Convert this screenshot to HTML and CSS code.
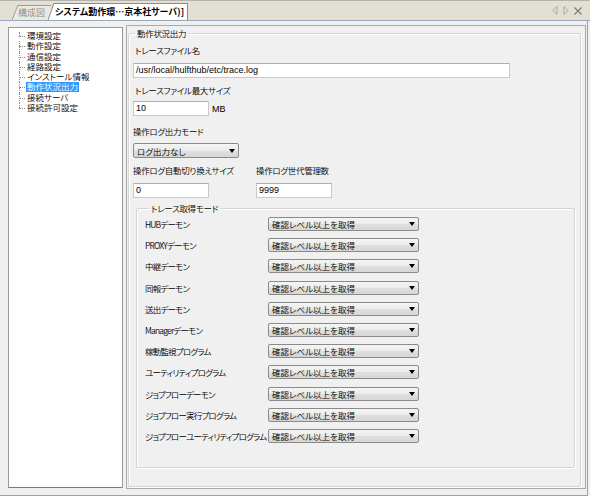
FILE: index.html
```html
<!DOCTYPE html>
<html lang="ja">
<head>
<meta charset="utf-8">
<title>システム動作環境</title>
<link rel="stylesheet" href="styles.css">
</head>
<body>
<div class="window">
  <div class="tabbar">
    <div class="tabs">
      <div class="tab inactive">
        <svg class="slant" width="6" height="15" viewBox="0 0 6 15"><polygon points="0,15 6,0 6,15" fill="#ebe9df"/><line x1="0" y1="15" x2="6" y2="0" stroke="#9c9c9c" stroke-width="1"/></svg>
        <span class="tab-body">構成図</span>
      </div>
      <div class="tab active">
        <svg class="slant" width="6" height="17" viewBox="0 0 6 17"><polygon points="0,17 6,0 6,17" fill="#ffffff"/><line x1="0" y1="17" x2="6" y2="0" stroke="#8c8c8c" stroke-width="1"/></svg>
        <span class="tab-body">システム動作環…京本社サーバ)]</span>
      </div>
    </div>
    <div class="tabtools">
      <svg width="6" height="9" viewBox="0 0 6 9"><polygon points="5,0.5 0.8,4.5 5,8.5" fill="none" stroke="#a8a8a8" stroke-width="1"/></svg>
      <svg width="6" height="9" viewBox="0 0 6 9"><polygon points="1,0.5 5.2,4.5 1,8.5" fill="none" stroke="#a8a8a8" stroke-width="1"/></svg>
      <svg width="8" height="8" viewBox="0 0 8 8"><path d="M0.5 0.5 L7.5 7.5 M7.5 0.5 L0.5 7.5" stroke="#7a7a7a" stroke-width="1.2"/></svg>
    </div>
  </div>
  <div class="main">
    <div class="tree">
      <ul class="tree-list">
        <li><span class="node">環境設定</span></li>
        <li><span class="node">動作設定</span></li>
        <li><span class="node">通信設定</span></li>
        <li><span class="node">経路設定</span></li>
        <li><span class="node">インストール情報</span></li>
        <li><span class="node selected">動作状況出力</span></li>
        <li><span class="node">接続サーバ</span></li>
        <li><span class="node">接続許可設定</span></li>
      </ul>
    </div>
    <div class="panel">
      <fieldset class="group outer">
        <legend>動作状況出力</legend>
        <div class="label first">トレースファイル名</div>
        <div class="field-row"><div class="input wide">/usr/local/hulfthub/etc/trace.log</div></div>
        <div class="label">トレースファイル最大サイズ</div>
        <div class="field-row fr2"><div class="input short">10</div><span class="unit">MB</span></div>
        <div class="label l3">操作ログ出力モード</div>
        <div class="field-row fr3"><div class="combo mode"><span>ログ出力なし</span><i class="arrow"></i></div></div>
        <div class="pair labels">
          <div class="plabel">操作ログ自動切り換えサイズ</div>
          <div class="plabel">操作ログ世代管理数</div>
        </div>
        <div class="pair inputs">
          <div class="input short">0</div>
          <div class="input short">9999</div>
        </div>
        <fieldset class="group inner">
          <legend>トレース取得モード</legend>
          <div class="rows">
            <div class="row"><span class="rlabel">HUBデーモン</span><div class="combo level"><span>確認レベル以上を取得</span><i class="arrow"></i></div></div>
            <div class="row"><span class="rlabel">PROXYデーモン</span><div class="combo level"><span>確認レベル以上を取得</span><i class="arrow"></i></div></div>
            <div class="row"><span class="rlabel">中継デーモン</span><div class="combo level"><span>確認レベル以上を取得</span><i class="arrow"></i></div></div>
            <div class="row"><span class="rlabel">同報デーモン</span><div class="combo level"><span>確認レベル以上を取得</span><i class="arrow"></i></div></div>
            <div class="row"><span class="rlabel">送出デーモン</span><div class="combo level"><span>確認レベル以上を取得</span><i class="arrow"></i></div></div>
            <div class="row"><span class="rlabel">Managerデーモン</span><div class="combo level"><span>確認レベル以上を取得</span><i class="arrow"></i></div></div>
            <div class="row"><span class="rlabel">稼動監視プログラム</span><div class="combo level"><span>確認レベル以上を取得</span><i class="arrow"></i></div></div>
            <div class="row"><span class="rlabel">ユーティリティプログラム</span><div class="combo level"><span>確認レベル以上を取得</span><i class="arrow"></i></div></div>
            <div class="row"><span class="rlabel">ジョブフローデーモン</span><div class="combo level"><span>確認レベル以上を取得</span><i class="arrow"></i></div></div>
            <div class="row"><span class="rlabel">ジョブフロー実行プログラム</span><div class="combo level"><span>確認レベル以上を取得</span><i class="arrow"></i></div></div>
            <div class="row"><span class="rlabel">ジョブフローユーティリティプログラム</span><div class="combo level"><span>確認レベル以上を取得</span><i class="arrow"></i></div></div>
          </div>
        </fieldset>
      </fieldset>
    </div>
  </div>
</div>
</body>
</html>
```
FILE: styles.css
```css
* { box-sizing: border-box; }
html, body { margin: 0; padding: 0; }
body {
  width: 590px;
  height: 496px;
  overflow: hidden;
  background: #f0f0f0;
  font-family: "Noto Sans CJK JP", "Liberation Sans", sans-serif;
  font-size: 8.5px;
  font-weight: 350;
  font-feature-settings: "palt";
  letter-spacing: -0.3px;
  color: #000;
}
.window { width: 588px; }

/* tab bar */
.tabbar {
  height: 21px;
  background: #e3e0d3;
  border-top: 1px solid #b4b3ad;
  border-bottom: 1px solid #97aabb;
  display: flex;
  justify-content: space-between;
  align-items: flex-end;
  width: 590px;
}
.tabs { display: flex; align-items: flex-end; padding-left: 12px; }
.tab { display: flex; align-items: flex-end; }
.slant { display: block; }
.tab-body { display: block; white-space: nowrap; letter-spacing: 0; }
.tab.inactive .tab-body {
  height: 15px;
  line-height: 14px;
  padding: 0 6px 0 0;
  background: #ebe9df;
  border-top: 1px solid #9c9c9c;
  color: #8a8a8a;
  font-size: 9px;
}
.tab.active { margin-left: -3px; }
.tab.active .tab-body {
  height: 17px;
  line-height: 16px;
  padding: 0 3px 0 1px;
  background: #fff;
  border-top: 1px solid #8c8c8c;
  border-right: 1px solid #8c8c8c;
  font-weight: bold;
  font-size: 9px;
}
.tabtools {
  display: flex;
  align-items: center;
  gap: 5px;
  height: 19px;
  padding-right: 8px;
}
.tabtools svg { display: block; }

/* main area */
.main {
  display: flex;
  align-items: flex-start;
  height: 475px;
  padding: 4px 0 0 8px;
  border-right: 1px solid #a0a0a0;
  border-bottom: 1px solid #a0a0a0;
}
.tree {
  width: 115px;
  height: 461px;
  margin-top: 2px;
  background: #fff;
  border: 1px solid #9a9a9a;
  border-bottom-color: #7c7c7c;
}
.tree-list {
  list-style: none;
  margin: 0;
  padding: 3px 0 0 10px;
  font-family: "Liberation Sans", "Noto Sans CJK JP", sans-serif;
}
.tree-list li {
  position: relative;
  height: 10.3px;
  line-height: 10.3px;
  padding-left: 7px;
  white-space: nowrap;
  letter-spacing: 0;
}
.tree-list li::before {
  content: "";
  position: absolute;
  left: 0;
  top: 5px;
  width: 6px;
  border-top: 1px dotted #8a8a8a;
}
.tree-list li::after {
  content: "";
  position: absolute;
  left: 0;
  top: 0;
  height: 10.3px;
  border-left: 1px dotted #8a8a8a;
}
.tree-list li:first-child::after { top: 1px; height: 4.3px; }
.tree-list li:last-child::after { height: 5px; }
.node { padding: 0 1px; }
.node.selected { background: #3399ff; color: #fff; }

.panel {
  width: 460px;
  height: 464px;
  margin-left: 3px;
  border: 1px solid #a9a9a9;
  background: #f0f0f0;
}

/* group boxes */
.group {
  margin: 0;
  border: 1px solid #d5d5d5;
  box-shadow: inset 1px 1px 0 #fff, 1px 1px 0 #fff;
  border-radius: 2px;
}
.group legend {
  padding: 0 2px;
  line-height: 11px;
  height: 11px;
}
.outer {
  width: 453px;
  height: 459px;
  margin: 2px 0 0 1px;
  padding: 0 4px 0 4px;
}
.outer > legend { margin-left: 2px; }

.label { height: 12px; line-height: 12px; margin: 6px 0 0 2px; }
.label.first { margin-top: 5px; }
.label.l3 { margin-top: 9px; margin-left: 0; }
.field-row { display: flex; align-items: center; margin-top: 7px; }
.field-row.fr2 { margin-top: 5px; }
.field-row.fr3 { margin-top: 6px; }
.input {
  height: 15px;
  line-height: 13px;
  background: #fff;
  border: 1px solid #c5c8cf;
  border-top-color: #abadb3;
  padding: 0 2px;
  font-family: "Liberation Sans", sans-serif;
  font-size: 9px;
  font-weight: 400;
  letter-spacing: 0;
  white-space: nowrap;
}
.input.wide { width: 377px; }
.input.short { width: 76px; }
.unit { margin-left: 3px; font-family: "Liberation Sans", sans-serif; font-size: 9px; font-weight: 400; letter-spacing: 0; }

.combo {
  display: flex;
  align-items: center;
  justify-content: space-between;
  height: 15px;
  border: 1px solid #8a8a8a;
  border-radius: 2px;
  background: linear-gradient(#f5f5f5, #ebebeb 50%, #dfdfdf 51%, #d6d6d6);
  padding: 0 3px 0 3px;
  white-space: nowrap;
  letter-spacing: 0;
}
.combo.mode { width: 106px; }
.combo.level { width: 151px; height: 14px; }
.arrow {
  display: block;
  width: 0;
  height: 0;
  border-left: 3.5px solid transparent;
  border-right: 3.5px solid transparent;
  border-top: 4px solid #000;
}

.pair {
  display: grid;
  grid-template-columns: 123px 123px;
}
.pair.labels { margin-top: 6px; height: 12px; line-height: 12px; }
.pair.inputs { margin-top: 7px; }

.inner {
  width: 439px;
  height: 265px;
  margin: 5px 0 0 3px;
  padding: 0 0 0 8px;
}
.inner > legend { margin-left: 4px; }
.rows {
  display: flex;
  flex-direction: column;
  gap: 7.2px;
  margin-top: 3px;
}
.row {
  display: flex;
  align-items: center;
  height: 14px;
}
.rlabel { width: 123px; white-space: nowrap; letter-spacing: -0.8px; }
```
